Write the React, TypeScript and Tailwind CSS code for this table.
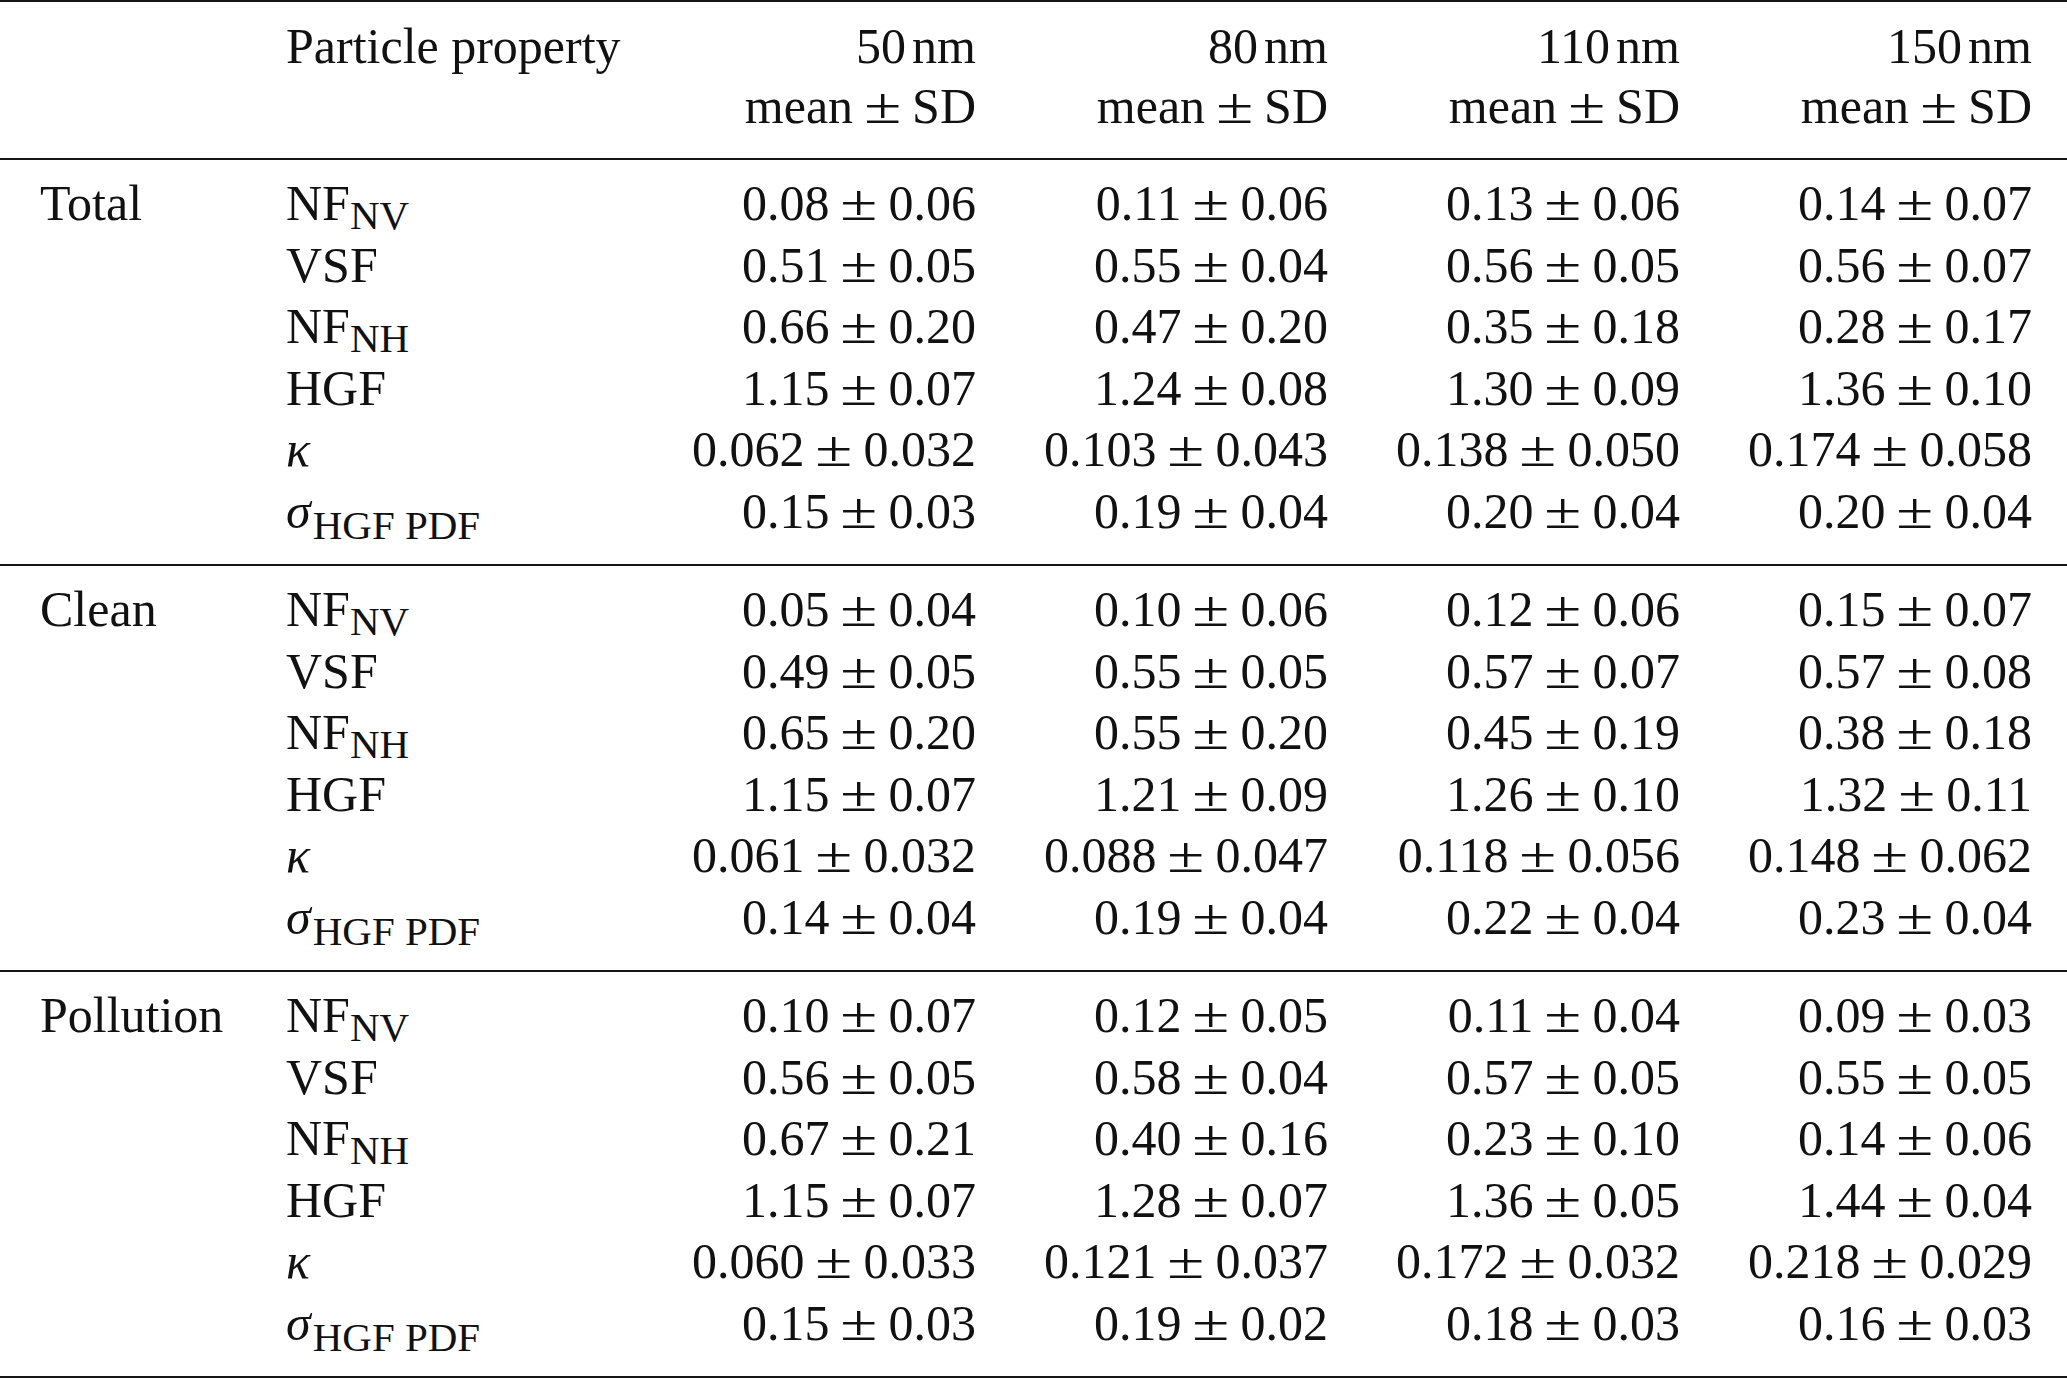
import React from "react";

type Row = { prop: React.ReactNode; values: string[] };

const NF = (sub: string) => (
  <>
    NF
    <span className="text-[41px] leading-none align-[-9px]">{sub}</span>
  </>
);

const Kappa = <span className="italic">κ</span>;

const Sigma = (
  <>
    <span className="italic">σ</span>
    <span className="ml-[2px] text-[41px] leading-none align-[-11px]">HGF PDF</span>
  </>
);

const sections: { label: string; rows: Row[] }[] = [
  {
    label: "Total",
    rows: [
      { prop: NF("NV"), values: ["0.08|0.06", "0.11|0.06", "0.13|0.06", "0.14|0.07"] },
      { prop: "VSF", values: ["0.51|0.05", "0.55|0.04", "0.56|0.05", "0.56|0.07"] },
      { prop: NF("NH"), values: ["0.66|0.20", "0.47|0.20", "0.35|0.18", "0.28|0.17"] },
      { prop: "HGF", values: ["1.15|0.07", "1.24|0.08", "1.30|0.09", "1.36|0.10"] },
      { prop: Kappa, values: ["0.062|0.032", "0.103|0.043", "0.138|0.050", "0.174|0.058"] },
      { prop: Sigma, values: ["0.15|0.03", "0.19|0.04", "0.20|0.04", "0.20|0.04"] },
    ],
  },
  {
    label: "Clean",
    rows: [
      { prop: NF("NV"), values: ["0.05|0.04", "0.10|0.06", "0.12|0.06", "0.15|0.07"] },
      { prop: "VSF", values: ["0.49|0.05", "0.55|0.05", "0.57|0.07", "0.57|0.08"] },
      { prop: NF("NH"), values: ["0.65|0.20", "0.55|0.20", "0.45|0.19", "0.38|0.18"] },
      { prop: "HGF", values: ["1.15|0.07", "1.21|0.09", "1.26|0.10", "1.32|0.11"] },
      { prop: Kappa, values: ["0.061|0.032", "0.088|0.047", "0.118|0.056", "0.148|0.062"] },
      { prop: Sigma, values: ["0.14|0.04", "0.19|0.04", "0.22|0.04", "0.23|0.04"] },
    ],
  },
  {
    label: "Pollution",
    rows: [
      { prop: NF("NV"), values: ["0.10|0.07", "0.12|0.05", "0.11|0.04", "0.09|0.03"] },
      { prop: "VSF", values: ["0.56|0.05", "0.58|0.04", "0.57|0.05", "0.55|0.05"] },
      { prop: NF("NH"), values: ["0.67|0.21", "0.40|0.16", "0.23|0.10", "0.14|0.06"] },
      { prop: "HGF", values: ["1.15|0.07", "1.28|0.07", "1.36|0.05", "1.44|0.04"] },
      { prop: Kappa, values: ["0.060|0.033", "0.121|0.037", "0.172|0.032", "0.218|0.029"] },
      { prop: Sigma, values: ["0.15|0.03", "0.19|0.02", "0.18|0.03", "0.16|0.03"] },
    ],
  },
];

// math-style ± : a bit wider than the text glyph
function PlusMinus({ a, b }: { a: React.ReactNode; b: React.ReactNode }) {
  return (
    <span className="whitespace-nowrap">
      {a}
      <span className="mx-[10px] inline-block w-[39px] text-center">
        <span className="inline-block scale-x-[1.35]">±</span>
      </span>
      {b}
    </span>
  );
}

const Rule = () => <div className="h-[2px] w-full bg-[#161616]" />;

const grid = "grid grid-cols-[246px_338px_352px_352px_352px_352px] pl-[40px]";

export default function App() {
  const sizes = ["50", "80", "110", "150"];
  return (
    <div className="h-[1378px] w-[2067px] overflow-hidden bg-white font-['Liberation_Serif','Times_New_Roman',serif] text-[50px] text-[#111]">
      <Rule />
      <div className={`${grid} auto-rows-[60px] pt-[14px] pb-[22px] leading-[60px]`}>
        <div />
        <div className="whitespace-nowrap">Particle property</div>
        {sizes.map((s) => (
          <div key={s} className="text-right">
            {s}
            <span className="ml-[6px]">nm</span>
          </div>
        ))}
        <div />
        <div />
        {sizes.map((s) => (
          <div key={s} className="text-right">
            <PlusMinus a="mean" b="SD" />
          </div>
        ))}
      </div>
      {sections.map((sec) => (
        <React.Fragment key={sec.label}>
          <Rule />
          <div className={`${grid} auto-rows-[61.5px] pt-[13px] pb-[22px] leading-[61.5px]`}>
            {sec.rows.map((row, i) => (
              <React.Fragment key={i}>
                <div>{i === 0 ? sec.label : ""}</div>
                <div className="whitespace-nowrap">{row.prop}</div>
                {row.values.map((v, j) => {
                  const [a, b] = v.split("|");
                  return (
                    <div key={j} className="text-right">
                      <PlusMinus a={a} b={b} />
                    </div>
                  );
                })}
              </React.Fragment>
            ))}
          </div>
        </React.Fragment>
      ))}
      <Rule />
    </div>
  );
}
